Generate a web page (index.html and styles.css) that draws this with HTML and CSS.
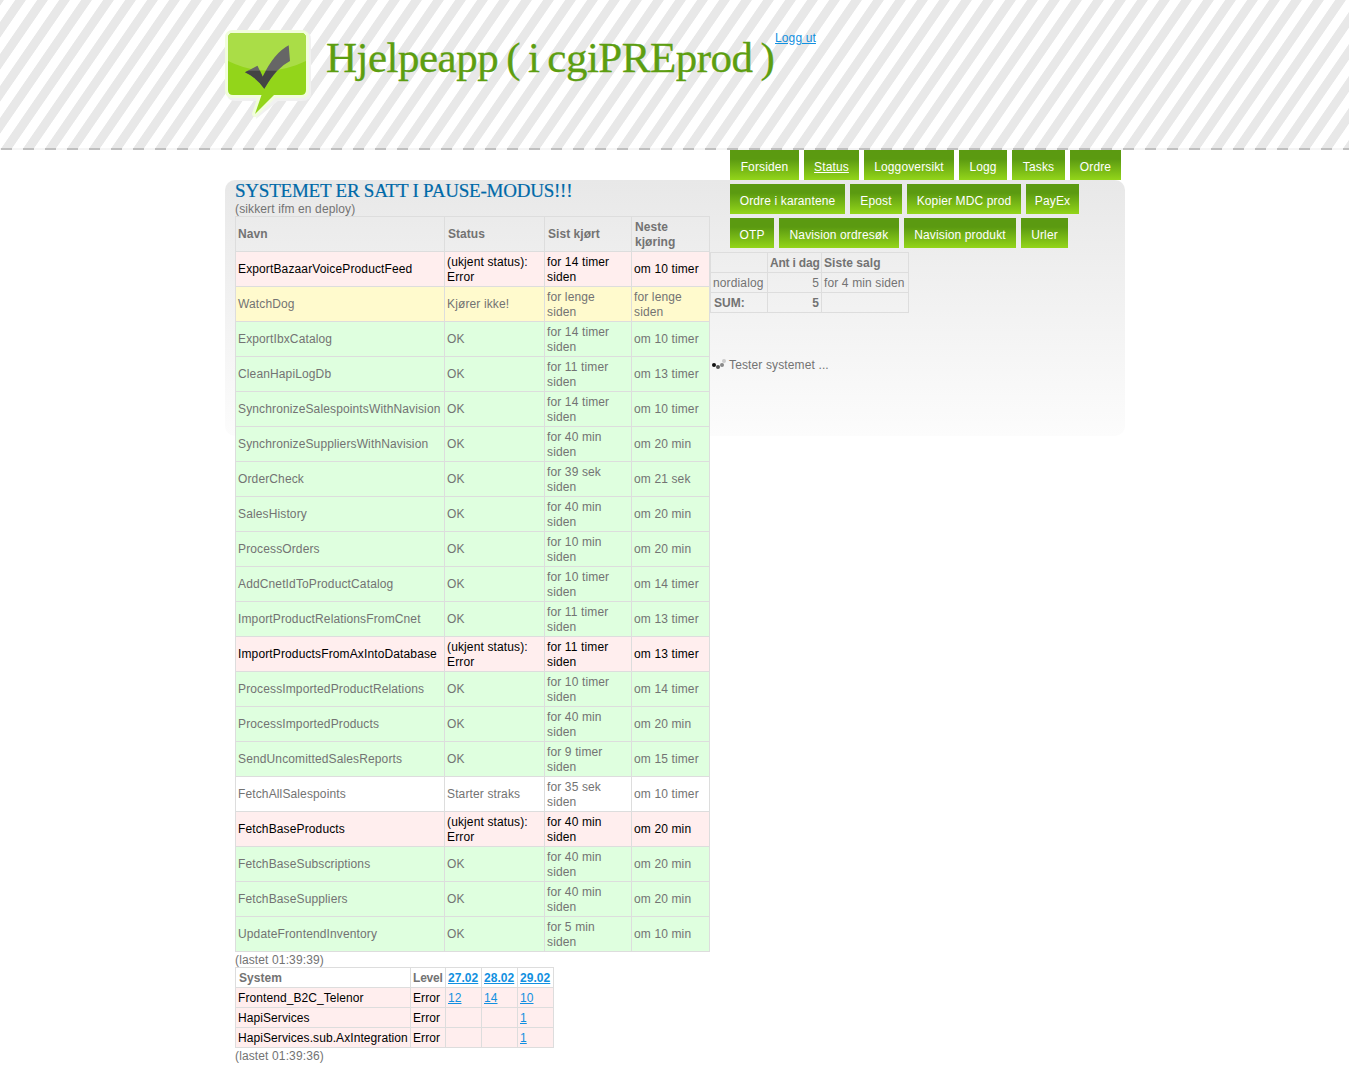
FILE: index.html
```html
<!DOCTYPE html>
<html lang="no">
<head>
<meta charset="utf-8">
<title>Hjelpeapp</title>
<link rel="stylesheet" href="styles.css">
</head>
<body>
<header class="header">
  <div class="header-inner">
    <svg class="logo" width="90" height="92" viewBox="0 0 90 92">
      <path d="M10 2H79Q86 2 86 9V63Q86 71 77 71H53L31 89L33 71H10Q2 71 2 63V10Z" fill="#f1f1f1"/>
      <path d="M8 3H76Q81 3 81 8V60Q81 65 76 65H49L30 84L36.500 65H8Q3 65 3 60V8Q3 3 8 3Z" fill="#f1fddc" stroke="#f1fddc" stroke-width="6" stroke-linejoin="round"/>
      <path d="M8 3H76Q81 3 81 8V60Q81 65 76 65H49L30 84L36.500 65H8Q3 65 3 60V8Q3 3 8 3Z" fill="#93d51a"/>
      <path d="M8 3H76Q81 3 81 8V31Q42 50 3 31V8Q3 3 8 3Z" fill="#aadd47"/>
      <path d="M20 42.300L32.500 35.700L37.700 46.700Q49 23 63.700 15.300L65 31Q51 38 39.300 58.700Q31 47 20 42.300Z" fill="#666"/>
      <path d="M20 42.300L23 40.700H35L37.700 46.700L41 40.700H52Q46 47 39.300 58.700Q31 47 20 42.300Z" fill="#444"/>
    </svg>
    <h1 class="title">Hjelpeapp ( i cgiPREprod )</h1>
    <a class="logout" href="#">Logg ut</a>
  </div>
</header>
<main class="content">
  <section class="jobs">
    <h2 class="pause">SYSTEMET ER SATT I PAUSE-MODUS!!!</h2>
    <p>(sikkert ifm en deploy)</p>
    <table class="job-table">
      <colgroup><col class="c-name"><col class="c-status"><col class="c-last"><col class="c-next"></colgroup>
      <tr><th>Navn</th><th>Status</th><th>Sist kjørt</th><th>Neste kjøring</th></tr>
      <tr class="error"><td>ExportBazaarVoiceProductFeed</td><td>(ukjent status): Error</td><td>for 14 timer siden</td><td>om 10 timer</td></tr>
      <tr class="warn"><td>WatchDog</td><td>Kjører ikke!</td><td>for lenge<br>siden</td><td>for lenge<br>siden</td></tr>
      <tr class="ok"><td>ExportIbxCatalog</td><td>OK</td><td>for 14 timer siden</td><td>om 10 timer</td></tr>
      <tr class="ok"><td>CleanHapiLogDb</td><td>OK</td><td>for 11 timer siden</td><td>om 13 timer</td></tr>
      <tr class="ok"><td>SynchronizeSalespointsWithNavision</td><td>OK</td><td>for 14 timer siden</td><td>om 10 timer</td></tr>
      <tr class="ok"><td>SynchronizeSuppliersWithNavision</td><td>OK</td><td>for 40 min<br>siden</td><td>om 20 min</td></tr>
      <tr class="ok"><td>OrderCheck</td><td>OK</td><td>for 39 sek<br>siden</td><td>om 21 sek</td></tr>
      <tr class="ok"><td>SalesHistory</td><td>OK</td><td>for 40 min<br>siden</td><td>om 20 min</td></tr>
      <tr class="ok"><td>ProcessOrders</td><td>OK</td><td>for 10 min<br>siden</td><td>om 20 min</td></tr>
      <tr class="ok"><td>AddCnetIdToProductCatalog</td><td>OK</td><td>for 10 timer siden</td><td>om 14 timer</td></tr>
      <tr class="ok"><td>ImportProductRelationsFromCnet</td><td>OK</td><td>for 11 timer siden</td><td>om 13 timer</td></tr>
      <tr class="error"><td>ImportProductsFromAxIntoDatabase</td><td>(ukjent status): Error</td><td>for 11 timer siden</td><td>om 13 timer</td></tr>
      <tr class="ok"><td>ProcessImportedProductRelations</td><td>OK</td><td>for 10 timer siden</td><td>om 14 timer</td></tr>
      <tr class="ok"><td>ProcessImportedProducts</td><td>OK</td><td>for 40 min<br>siden</td><td>om 20 min</td></tr>
      <tr class="ok"><td>SendUncomittedSalesReports</td><td>OK</td><td>for 9 timer<br>siden</td><td>om 15 timer</td></tr>
      <tr class="soon"><td>FetchAllSalespoints</td><td>Starter straks</td><td>for 35 sek<br>siden</td><td>om 10 timer</td></tr>
      <tr class="error"><td>FetchBaseProducts</td><td>(ukjent status): Error</td><td>for 40 min<br>siden</td><td>om 20 min</td></tr>
      <tr class="ok"><td>FetchBaseSubscriptions</td><td>OK</td><td>for 40 min<br>siden</td><td>om 20 min</td></tr>
      <tr class="ok"><td>FetchBaseSuppliers</td><td>OK</td><td>for 40 min<br>siden</td><td>om 20 min</td></tr>
      <tr class="ok"><td>UpdateFrontendInventory</td><td>OK</td><td>for 5 min<br>siden</td><td>om 10 min</td></tr>
    </table>
    <p>(lastet 01:39:39)</p>
    <table class="log-table">
      <colgroup><col class="c-system"><col class="c-level"><col class="c-day"><col class="c-day"><col class="c-day"></colgroup>
      <tr><th>System</th><th class="tight">Level</th><th><a href="#">27.02</a></th><th><a href="#">28.02</a></th><th><a href="#">29.02</a></th></tr>
      <tr class="error"><td>Frontend_B2C_Telenor</td><td>Error</td><td><a href="#">12</a></td><td><a href="#">14</a></td><td><a href="#">10</a></td></tr>
      <tr class="error"><td>HapiServices</td><td>Error</td><td></td><td></td><td><a href="#">1</a></td></tr>
      <tr class="error"><td>HapiServices.sub.AxIntegration</td><td>Error</td><td></td><td></td><td><a href="#">1</a></td></tr>
    </table>
    <p>(lastet 01:39:36)</p>
  </section>
  <aside class="side">
    <nav class="nav">
      <div class="nav-row">
        <a href="#">Forsiden</a><a class="active" href="#">Status</a><a href="#">Loggoversikt</a><a href="#">Logg</a><a href="#">Tasks</a><a href="#">Ordre</a>
      </div>
      <div class="nav-row nav-row-2">
        <a href="#">Ordre i karantene</a><a href="#">Epost</a><a href="#">Kopier MDC prod</a><a href="#">PayEx</a>
      </div>
      <div class="nav-row nav-row-3">
        <a href="#">OTP</a><a href="#">Navision ordresøk</a><a href="#">Navision produkt</a><a href="#">Urler</a>
      </div>
    </nav>
    <table class="sales-table">
      <colgroup><col class="c-shop"><col class="c-count"><col class="c-sale"></colgroup>
      <tr><th></th><th class="tight">Ant i dag</th><th>Siste salg</th></tr>
      <tr><td>nordialog</td><td class="num">5</td><td>for 4 min siden</td></tr>
      <tr><th>SUM:</th><th class="num">5</th><th></th></tr>
    </table>
    <p class="testing">
      <svg width="16" height="16" viewBox="0 0 16 16"><circle cx="4" cy="7" r="2" fill="#111"/><circle cx="8" cy="9" r="2" fill="#555"/><circle cx="12" cy="7" r="2" fill="#888"/><circle cx="14" cy="3" r="2" fill="#ccc"/></svg>
      <span>Tester systemet ...</span>
    </p>
  </aside>
</main>
</body>
</html>
```
FILE: styles.css
```css
body {
  margin: 0;
  background: #fff;
  color: #737373;
  font: 12px/15px "Liberation Sans", Arial, sans-serif;
  letter-spacing: 0.13px;
}
p, h1, h2 { margin: 0; font-weight: normal; }
a { color: #1190e0; }

.header {
  box-sizing: border-box;
  height: 150px;
  background:
    linear-gradient(to right, #f5f5f5 1px, #c0c0c0 1px 12px, #f5f5f5 12px) 0 100% / 22px 2px repeat-x,
    linear-gradient(to bottom right, #e8e8e8 8%, #fff 10% 33.5%, #e8e8e8 35.5% 58%, #fff 60% 83.5%, #e8e8e8 85.5%) 0 0 / 22px 32px;
}
.header-inner {
  display: flex;
  align-items: flex-start;
  width: 900px;
  margin-left: 225px;
  padding-top: 30px;
}
.logo { display: block; overflow: visible; }
.title {
  width: 448px;
  margin-left: 11px;
  color: #5d9e11;
  font: 43px/56px Georgia, "Liberation Serif", serif;
  letter-spacing: -0.5px;
  word-spacing: -2.3px;
  -webkit-text-stroke: 0.3px #5d9e11;
  white-space: nowrap;
}
.logout { margin: 1px 0 0 1px; }

.content {
  position: relative;
  z-index: 0;
  display: flex;
  align-items: flex-start;
  box-sizing: border-box;
  width: 900px;
  margin: 30px 0 0 225px;
  padding: 0 0 23px 10px;
}
.content::before {
  content: "";
  position: absolute;
  z-index: -1;
  inset: 0 0 auto;
  height: 256px;
  border-radius: 10px;
  background: linear-gradient(#e8e8e8, #fcfcfc);
}
.jobs { width: 475px; flex: none; }
.jobs p { height: 15px; line-height: 17px; }
.pause {
  color: #0069a8;
  font: 19px/21px Georgia, "Liberation Serif", serif;
  -webkit-text-stroke: 0.2px #0069a8;
  letter-spacing: -0.23px;
  white-space: nowrap;
}

table { border-collapse: collapse; table-layout: fixed; }
td, th {
  height: 15px;
  padding: 3px 2px 1px;
  border: 1px solid #ddd;
  text-align: left;
}
th { letter-spacing: 0.05px; }
.job-table { width: 475px; }
.job-table td, .job-table th { height: 30px; padding: 2.5px 2px 1.5px; }
.job-table th + th { padding-left: 3px; }
.c-name { width: 209px; }
.c-status { width: 100px; }
.c-last { width: 87px; }
.c-next { width: 78px; }
.log-table { width: 319px; background: #fff; }
.log-table td { letter-spacing: 0.08px; }
.log-table th:first-child, .sales-table th:first-child { padding-left: 3px; }
.c-system { width: 175px; }
.c-level { width: 35px; }
.c-day { width: 36px; }
.log-table td, .log-table th { white-space: nowrap; }
.tight { letter-spacing: -0.2px; }
.error { background: #fee; color: #000; }
.warn { background: #fffacd; }
.ok { background: #dfffdf; }
.soon { background: #fff; }

.side { flex: none; width: 415px; }
.nav {
  display: grid;
  gap: 4px;
  margin: -30px 0 4px 20px;
}
.nav-row {
  display: grid;
  grid-template-columns: 69px 55px 90px 48px 53px 51px;
  gap: 5px;
}
.nav-row-2 { grid-template-columns: 115px 52px 114px 53px; }
.nav-row-3 { grid-template-columns: 44px 120px 112px 47px; }
.nav a {
  height: 30px;
  background: linear-gradient(#5b9a11 30%, #93d51a);
  color: #fff;
  line-height: 34px;
  text-align: center;
  text-decoration: none;
  white-space: nowrap;
}
.nav .active { text-decoration: underline; }
.sales-table { width: 199px; }
.sales-table td, .sales-table th { white-space: nowrap; }
.c-shop { width: 57px; }
.c-count { width: 54px; }
.c-sale { width: 87px; }
.num { text-align: right; }
.testing {
  display: flex;
  gap: 3px;
  margin-top: 45px;
}
```
